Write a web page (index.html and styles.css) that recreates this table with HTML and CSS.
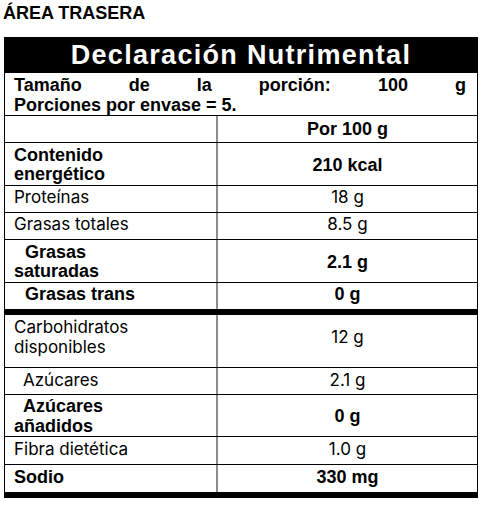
FILE: index.html
```html
<!DOCTYPE html>
<html lang="es">
<head>
<meta charset="utf-8">
<title>Declaración Nutrimental</title>
<link rel="stylesheet" href="styles.css">
</head>
<body>
<h1 class="title">ÁREA TRASERA</h1>
<div class="label">
  <div class="head">Declaración Nutrimental</div>
  <div class="serving">
    <div class="just">Tamaño de la porción: 100 g</div>
    <div>Porciones por envase = 5.</div>
  </div>
  <div class="row bold one">
    <div class="name"></div>
    <div class="val">Por 100 g</div>
  </div>
  <div class="row bold two">
    <div class="name">Contenido<br>energético</div>
    <div class="val">210 kcal</div>
  </div>
  <div class="row reg one">
    <div class="name">Proteínas</div>
    <div class="val">18 g</div>
  </div>
  <div class="row reg one">
    <div class="name">Grasas totales</div>
    <div class="val">8.5 g</div>
  </div>
  <div class="row bold two">
    <div class="name ind">Grasas<br>saturadas</div>
    <div class="val">2.1 g</div>
  </div>
  <div class="row bold trans">
    <div class="name ind">Grasas trans</div>
    <div class="val">0 g</div>
  </div>
  <div class="sep"></div>
  <div class="row reg tall">
    <div class="name">Carbohidratos<br>disponibles</div>
    <div class="val">12 g</div>
  </div>
  <div class="row reg sub">
    <div class="name ind2">Azúcares</div>
    <div class="val">2.1 g</div>
  </div>
  <div class="row bold added">
    <div class="name ind2">Azúcares<br>añadidos</div>
    <div class="val">0 g</div>
  </div>
  <div class="row reg fiber">
    <div class="name">Fibra dietética</div>
    <div class="val">1.0 g</div>
  </div>
  <div class="row bold sodium">
    <div class="name">Sodio</div>
    <div class="val">330 mg</div>
  </div>
  <div class="bar"></div>
</div>
</body>
</html>
```

FILE: styles.css
```css
html, body {
  margin: 0;
  padding: 0;
  background: #fff;
  color: #000;
}

body {
  font-family: "Liberation Sans", Arial, sans-serif;
}

.title {
  margin: 3px 0 0 3px;
  font-size: 18px;
  line-height: 20px;
  font-weight: 700;
}

.label {
  margin: 14px 4px 0 4px;
  width: 472px;
  border-left: 1px solid #000;
  border-right: 1px solid #000;
}

.head {
  margin: 0 -1px;
  height: 36px;
  background: #000;
  color: #fff;
  text-align: center;
  font-size: 27px;
  line-height: 36px;
  font-weight: 700;
  letter-spacing: 1.3px;
}

.serving {
  padding: 2px 11px 0 9px;
  font-size: 18px;
  line-height: 20px;
  font-weight: 700;
  border-bottom: 1px solid #000;
}

.just {
  text-align: justify;
  text-align-last: justify;
}

.row {
  display: grid;
  grid-template-columns: 213px 1fr;
  border-bottom: 1px solid #000;
  line-height: 19px;
}

.name {
  padding: 0 4px 0 9px;
  border-right: 2px solid #8c8c8c;
}

.val {
  display: flex;
  align-items: center;
  justify-content: center;
}

.bold {
  font-family: "Liberation Sans", Arial, sans-serif;
  font-size: 18px;
  font-weight: 700;
}

.reg {
  font-family: Inter, "Liberation Sans", sans-serif;
  font-size: 17px;
  font-weight: 400;
}

/* vertical rhythm per row type (padding applies to both cells) */
.bold.one > div { padding-top: 4px; padding-bottom: 3px; }
.reg.one > div { padding-top: 2px; padding-bottom: 5px; }
.two > div { padding-top: 3px; padding-bottom: 1px; }

.trans { border-bottom: none; }
.trans > div { padding-top: 2px; padding-bottom: 5px; }

.tall { line-height: 20px; }
.tall > div { padding-top: 2px; padding-bottom: 10px; }

.sub > div { padding-top: 3px; padding-bottom: 4px; }

.added { line-height: 20px; }
.added > div { padding-top: 1px; padding-bottom: 0; }

.fiber > div { padding-top: 3px; padding-bottom: 5px; }

.sodium { border-bottom: none; }
.sodium > div { padding-top: 3px; padding-bottom: 5px; }

.ind { text-indent: 11px; }
.ind2 { text-indent: 9px; }

.sep {
  margin: 0 -1px;
  height: 6px;
  background: #000;
}

.bar {
  margin: 0 -1px;
  height: 6px;
  background: #000;
}
```
